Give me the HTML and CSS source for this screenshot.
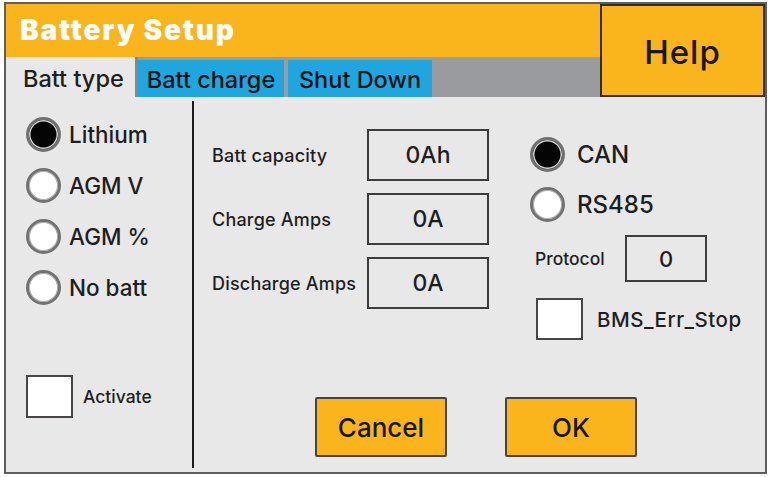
FILE: index.html
```html
<!DOCTYPE html>
<html>
<head>
<meta charset="utf-8">
<title>Battery Setup</title>
<link rel="stylesheet" href="styles.css">
</head>
<body>
<div class="frame">
  <div class="top">
    <div class="top-left">
      <div class="title">Battery Setup</div>
      <div class="tabs">
        <div class="tab active">Batt type</div>
        <div class="tab blue first">Batt charge</div>
        <div class="tab blue second">Shut Down</div>
      </div>
    </div>
    <div class="help">Help</div>
  </div>
  <div class="body">
    <div class="left">
      <div class="radio-row"><span class="radio checked"></span><span class="rlabel">Lithium</span></div>
      <div class="radio-row"><span class="radio"></span><span class="rlabel">AGM V</span></div>
      <div class="radio-row"><span class="radio"></span><span class="rlabel">AGM %</span></div>
      <div class="radio-row"><span class="radio"></span><span class="rlabel">No batt</span></div>
      <div class="check-row activate"><span class="check"></span><span class="clabel">Activate</span></div>
    </div>
    <div class="divider"></div>
    <div class="main">
      <div class="upper">
        <div class="fields">
          <div class="flabel">Batt capacity</div><div class="box">0Ah</div>
          <div class="flabel">Charge Amps</div><div class="box">0A</div>
          <div class="flabel">Discharge Amps</div><div class="box">0A</div>
        </div>
        <div class="right">
          <div class="radio-row wide"><span class="radio checked"></span><span class="rlabel big">CAN</span></div>
          <div class="radio-row wide"><span class="radio"></span><span class="rlabel big">RS485</span></div>
          <div class="proto-row"><span class="plabel">Protocol</span><span class="pbox">0</span></div>
          <div class="check-row bms"><span class="check"></span><span class="clabel large">BMS_Err_Stop</span></div>
        </div>
      </div>
      <div class="buttons">
        <div class="btn">Cancel</div>
        <div class="btn">OK</div>
      </div>
    </div>
  </div>
</div>
</body>
</html>
```
FILE: styles.css
```css
* { box-sizing: border-box; }
html, body { margin: 0; padding: 0; background: #ffffff; }
body {
  font-family: Inter, "Liberation Sans", Arial, sans-serif;
  font-weight: 500;
  color: #1e1e1e;
}
.frame {
  margin: 2px 0 0 4px;
  width: 763px;
  height: 472px;
  border: 2px solid #5e5e5e;
  display: flex;
  flex-direction: column;
  background: #e7e8e7;
}
.top {
  display: flex;
  height: 93px;
}
.top-left {
  flex: 1;
  display: flex;
  flex-direction: column;
}
.title {
  height: 53px;
  background: #fbb51c;
  color: #ffffff;
  font-family: Inter, "DejaVu Sans", sans-serif;
  font-weight: 900;
  font-size: 28px;
  letter-spacing: 1.8px;
  display: flex;
  align-items: center;
  padding-left: 14px;
  padding-bottom: 2px;
}
.tabs {
  height: 40px;
  background: #9a9b9f;
  display: flex;
  align-items: flex-end;
}
.tab {
  font-size: 23.5px;
  display: flex;
  align-items: center;
  padding-top: 2px;
}
.tab.active {
  height: 40px;
  background: #e7e8e7;
  padding-left: 17px;
  border-right: 3px solid #85878b;
  width: 132px;
}
.tab.blue {
  height: 37px;
  background: #1fa6de;
  justify-content: center;
  color: #111;
}
.tab.first { width: 146px; }
.tab.second { width: 144px; margin-left: 4px; }
.help {
  width: 165px;
  height: 93px;
  background: #fbb51c;
  border: 2px solid #2e2e2e;
  font-size: 33px;
  letter-spacing: 1px;
  display: flex;
  align-items: center;
  justify-content: center;
  color: #161616;
  padding-top: 2px;
}
.body {
  flex: 1;
  display: flex;
}
.left {
  width: 186px;
  display: flex;
  flex-direction: column;
  padding: 12px 0 0 20px;
}
.divider {
  width: 2px;
  background: #1a1a1a;
  margin: 4px 0 4px 0;
}
.radio-row {
  height: 51px;
  display: flex;
  align-items: center;
}
.radio-row.wide { height: 50px; }
.radio {
  width: 35px;
  height: 35px;
  border-radius: 50%;
  background: #ffffff;
  border: 3px solid #727272;
  box-shadow: inset 0 0 0 1px #b0b0b0;
  flex: none;
}
.radio.checked {
  background: #050505;
  box-shadow: inset 0 0 0 1.5px #d0d0d0;
}
.rlabel {
  margin-left: 8px;
  font-size: 22.5px;
}
.rlabel.big {
  font-size: 24px;
  margin-left: 12px;
}
.check-row {
  display: flex;
  align-items: center;
}
.check {
  width: 47px;
  height: 43px;
  background: #ffffff;
  border: 2px solid #4a4545;
  flex: none;
}
.activate { margin-top: 62px; }
.clabel {
  margin-left: 10px;
  font-size: 17.5px;
}
.clabel.large {
  margin-left: 14px;
  font-size: 20.5px;
  letter-spacing: 0.5px;
}
.main {
  flex: 1;
  display: flex;
  flex-direction: column;
  padding: 32px 0 15px 18px;
}
.upper {
  display: flex;
  align-items: flex-start;
}
.fields {
  display: grid;
  grid-template-columns: 155px 122px;
  grid-auto-rows: 52px;
  row-gap: 12px;
  align-items: center;
}
.flabel {
  font-size: 18px;
  letter-spacing: 0.2px;
}
.box {
  height: 52px;
  border: 2px solid #3c3c3c;
  display: flex;
  align-items: center;
  justify-content: center;
  font-size: 23px;
}
.right {
  margin-left: 41px;
  display: flex;
  flex-direction: column;
}
.proto-row {
  display: flex;
  align-items: center;
  margin-top: 6px;
  padding-left: 5px;
}
.plabel {
  width: 90px;
  font-size: 17.5px;
}
.pbox {
  width: 82px;
  height: 47px;
  border: 2px solid #3c3c3c;
  display: flex;
  align-items: center;
  justify-content: center;
  font-size: 22px;
}
.bms {
  margin-top: 16px;
  padding-left: 6px;
}
.bms .check { height: 42px; }
.buttons {
  margin-top: auto;
  display: flex;
  gap: 58px;
  padding-left: 103px;
}
.btn {
  width: 132px;
  height: 60px;
  background: #fbb51c;
  border: 2px solid #444444;
  border-radius: 2px;
  display: flex;
  align-items: center;
  justify-content: center;
  font-size: 26px;
  color: #161616;
}
```
